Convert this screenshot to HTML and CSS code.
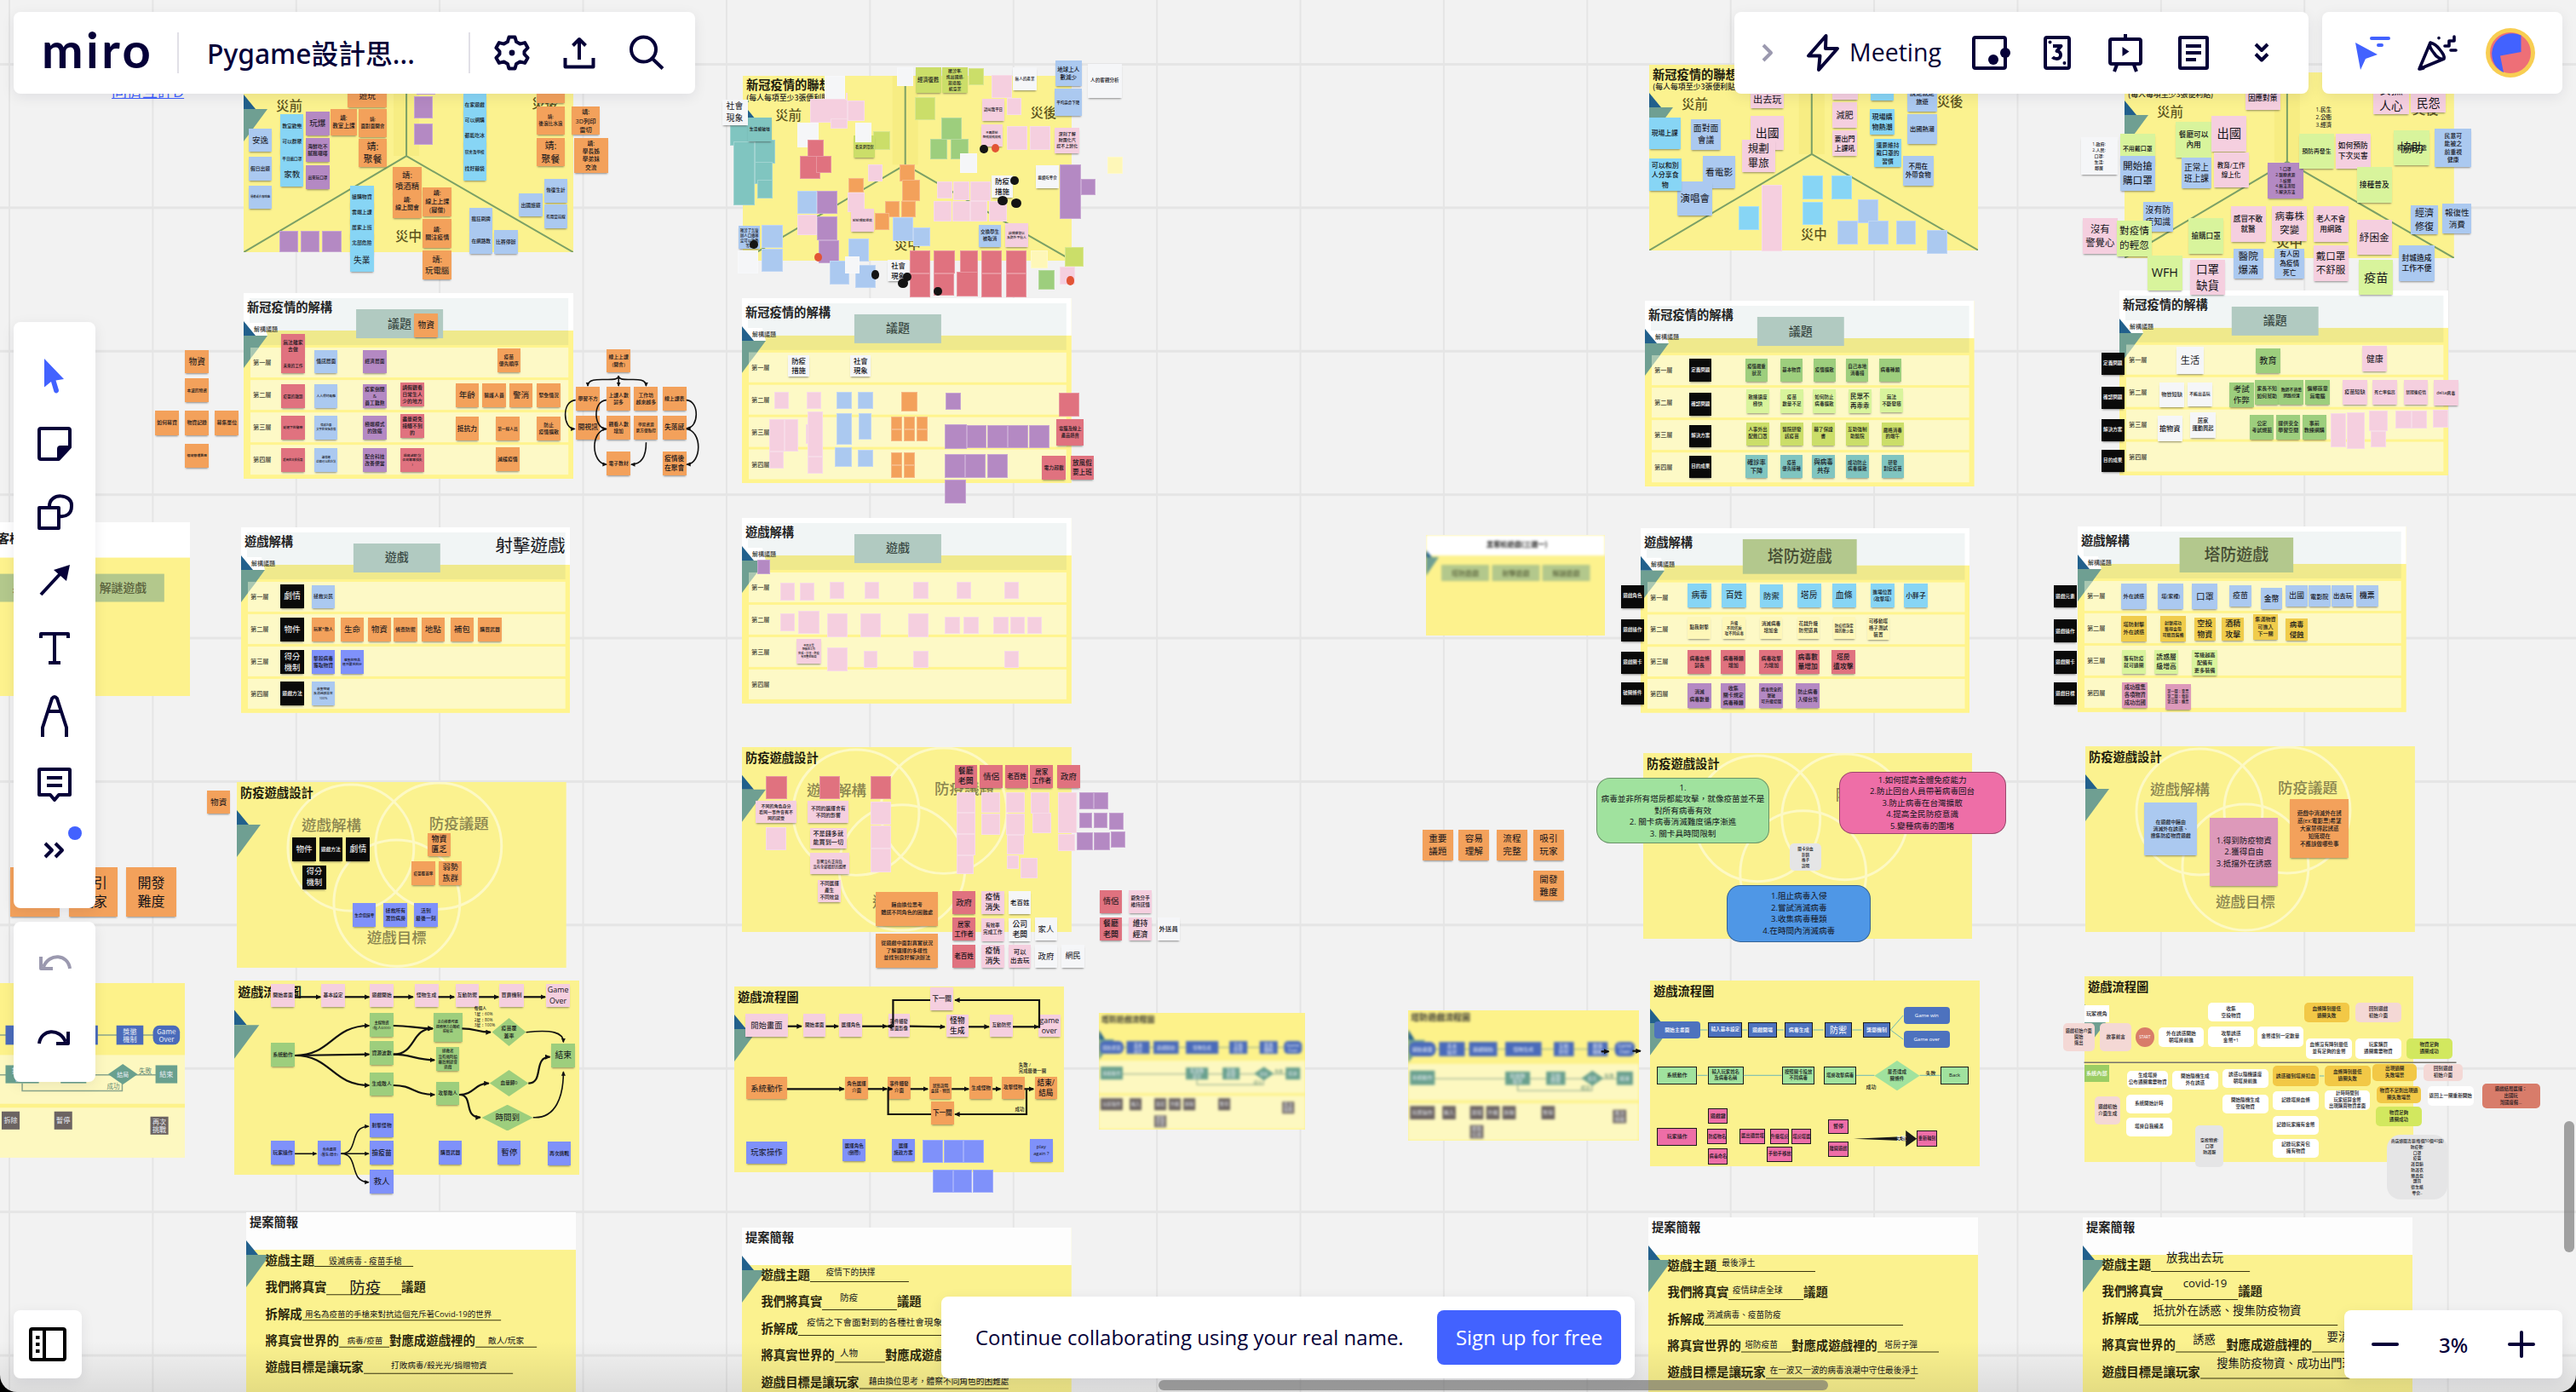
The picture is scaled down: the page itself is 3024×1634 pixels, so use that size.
FILE: index.html
```html
<!DOCTYPE html>
<html lang="zh-Hant">
<head>
<meta charset="utf-8">
<title>Pygame設計思考 - Miro</title>
<link rel="stylesheet" href="styles.css">
</head>
<body>
<main class="board" id="board"></main>

<header class="panel bar-left">
  <span class="logo">miro</span>
  <span class="divider"></span>
  <span class="board-name">Pygame設計思...</span>
  <span class="divider"></span>
  <svg class="icon" viewBox="0 0 44 44"><path d="M18.5 3.5h7l1.6 5.6 4.3 2.5 5.7-1.5 3.5 6.1-4.1 4.2v3.2l4.1 4.2-3.5 6.1-5.7-1.5-4.3 2.5-1.6 5.6h-7l-1.6-5.6-4.3-2.5-5.7 1.5-3.5-6.1 4.1-4.2v-3.2l-4.1-4.2 3.5-6.1 5.7 1.5 4.3-2.5z"/><circle class="solid" cx="22" cy="22" r="3.4"/></svg>
  <svg class="icon" viewBox="0 0 44 44"><path d="M22 30V7M14.5 13.5L22 6l7.500 7.500M5.500 28v10.500h33V28"/></svg>
  <svg class="icon" viewBox="0 0 44 44"><circle cx="18.500" cy="18" r="14.500"/><path d="M29 29l12 11.500"/></svg>
</header>

<div class="panel bar-tools">
  <svg class="icon chevron" viewBox="0 0 16 24"><path d="M3 3l9 9-9 9"/></svg>
  <svg class="icon bolt" viewBox="0 0 44 48"><path d="M25.500 4L5 27.500h13.500L17 44l22-25H25z"/></svg>
  <span class="tool-label">Meeting</span>
  <svg class="icon frame-ic" viewBox="0 0 48 44"><rect x="4" y="4" width="37" height="36" rx="2"/><circle class="solid" cx="27" cy="30" r="6"/><circle class="solid" cx="41" cy="22" r="6"/></svg>
  <svg class="icon card-ic" viewBox="0 0 36 44"><rect x="4" y="4" width="28" height="36" rx="2"/><path d="M13 14h9.500l-5 6c6 0 6 9 0 9-2.500 0-4-.8-5-2"/><circle class="solid" cx="9.500" cy="9.500" r="2"/><circle class="solid" cx="26.500" cy="34" r="2"/></svg>
  <svg class="icon present-ic" viewBox="0 0 44 48"><path d="M22 2v5M12 38l-3 8M32 38l3 8"/><rect x="4" y="8" width="36" height="29" rx="2"/><path class="solid thin" d="M18.500 17l8 5.500-8 5.500z"/></svg>
  <svg class="icon doc-ic" viewBox="0 0 40 44"><rect x="4" y="4" width="32" height="36" rx="1"/><path d="M11 14h18M11 22h18M11 30h12"/></svg>
  <svg class="icon more-ic" viewBox="0 0 20 26"><path d="M3 3l7 7 7-7M3 14.500l7 7 7-7"/></svg>
</div>

<div class="panel bar-user">
  <svg class="icon follow-ic" viewBox="0 0 44 44"><path class="blue-fill" d="M2 10l26 14-14 5-6 13z"/><path class="blue-line" d="M21 5h20M29 13h4"/></svg>
  <svg class="icon party-ic" viewBox="0 0 48 44"><path d="M16 10L3 41l29-12M16 10c4 1 8 4 11 8 4 5 6 8 5 11-4 1-9-2-12-7-4-5-6-9-4-12zM33 14l5 0 0-6 6 0 0-5M40 19h6M4 41l4-1M26 4.500v.2"/></svg>
  <svg class="avatar" viewBox="0 0 58 58"><circle cx="29" cy="29" r="29" fill="#f8ce52"/><circle cx="29" cy="29" r="24" fill="#ee6f77"/><path d="M41.500 8.500V28L17 32.500 21 52A24 24 0 1 1 41.500 8.500z" fill="#4262ff"/></svg>
</div>

<nav class="panel rail">
  <svg class="icon" viewBox="0 0 44 44"><path class="blue-fill" d="M10 2l23 24-9.500 1.500L27 39a3 3 0 0 1-5.500 2L18 29l-8 6.500z"/></svg>
  <svg class="icon" viewBox="0 0 44 44"><path d="M6 4h32a2 2 0 0 1 2 2v20L27 40H6a2 2 0 0 1-2-2V6a2 2 0 0 1 2-2z"/><path class="solid thin" d="M40 24L25 41V28a4 4 0 0 1 4-4z"/></svg>
  <svg class="icon" viewBox="0 0 44 44"><rect x="4" y="17" width="23" height="24"/><path d="M16 15c0-16 27-15 26 0 0 9-6 13-14 12"/></svg>
  <svg class="icon" viewBox="0 0 44 44"><path d="M6 39L31 12"/><path class="solid thin" d="M40 4l-4 19L21 10z"/></svg>
  <svg class="icon" viewBox="0 0 44 44"><path d="M6 10V5h32v5M22 5v34M15 39h14"/></svg>
  <svg class="icon tall" viewBox="0 0 44 52"><path d="M8 50V39L19 5q3-4 6 0l11 34v11M14 20h16"/></svg>
  <svg class="icon" viewBox="0 0 44 44"><path d="M5 4h34a1 1 0 0 1 1 1v29H27l-5 6-5-6H4V5a1 1 0 0 1 1-1zM13 14h18M13 23h18"/></svg>
  <svg class="icon more-rail" viewBox="0 0 44 44"><path d="M11 14l8 8-8 8M23 14l8 8-8 8"/></svg>
  <span class="dot-new"></span>
</nav>

<nav class="panel history">
  <svg class="icon muted" viewBox="0 0 44 44"><path d="M40 29C38 12 16 10 9 27M6 15v14h14"/></svg>
  <svg class="icon" viewBox="0 0 44 44"><path d="M4 29C6 12 28 10 35 27M38 15v14H24"/></svg>
</nav>

<div class="panel frames-toggle">
  <svg class="icon ink" viewBox="0 0 46 44"><rect x="3" y="4" width="40" height="36" rx="2"/><path d="M19 4v36M9 14h4.500M9 22h4.500M9 30h4.500"/></svg>
</div>

<div class="panel signup">
  <span>Continue collaborating using your real name.</span>
  <button class="signup-btn">Sign up for free</button>
</div>

<div class="panel zoom">
  <svg class="icon" viewBox="0 0 32 32"><path d="M2 16h28"/></svg>
  <span>3%</span>
  <svg class="icon" viewBox="0 0 32 32"><path d="M2 16h28M16 2v28"/></svg>
</div>

<div class="scroll-h"></div>
<div class="scroll-v"></div>
<script src="board.js"></script>
</body>
</html>
```

FILE: styles.css
```css
* { box-sizing: border-box; }

html { background: #000; }

body {
  margin: 0;
  width: 3024px;
  height: 1634px;
  overflow: hidden;
  position: relative;
  color: #050038;
  font-family: "Open Sans", "Noto Sans", "Noto Sans CJK TC", sans-serif;
}

/* canvas */
.board {
  position: absolute;
  inset: 0;
  overflow: hidden;
  border-radius: 0 0 20px 20px;
  background-color: #f2f2f2;
  background-image:
    linear-gradient(90deg, #e5e5e5 2px, transparent 2px),
    linear-gradient(#e5e5e5 3px, transparent 3px);
  background-size: 168.4px 168.4px;
  background-position: 10px 0, 0 74px;
}

.board::after {
  content: "";
  position: absolute;
  inset: auto 0 0 0;
  height: 60px;
  background: linear-gradient(transparent, rgba(0, 0, 0, .09));
}

.slide { position: absolute; display: block; overflow: hidden; }
.slide text { font-family: "Noto Sans CJK TC", "Open Sans", sans-serif; }
.slide svg { display: block; }
.slide.soft { background: #fdf28a; }
.slide.soft svg { filter: blur(1.4px); }
.links { position: absolute; left: 0; top: 0; pointer-events: none; }
.links path { fill: none; stroke: #111; stroke-width: 1.6; }
.links .thick { stroke-width: 2.2; }
.links .blue { stroke: #6fb7b5; stroke-width: 1; }
.links .rule { stroke: #77736c; stroke-width: 1.5; }
.links .wedge { fill: #1a1a1a; stroke: none; }

.item {
  position: absolute;
  display: flex;
  align-items: center;
  justify-content: center;
  text-align: center;
  white-space: pre;
  line-height: 1.4;
  color: #14141a;
  font-family: "Open Sans", "Noto Sans CJK TC", sans-serif;
}

.item.small { font-weight: 500; }

.note { box-shadow: 0 2px 2px -1px rgba(40, 40, 40, .5); }
.flat { box-shadow: inset 0 0 0 1px rgba(255, 255, 255, .25); }
.orange { background: #f3a15b; }
.sky { background: #abc9f0; }
.cyan { background: #87d5f5; }
.purple { background: #b489c3; }
.pink { background: #f5cfdf; }
.red { background: #e0727f; }
.green { background: #9dce7d; }
.mint { background: #d8f49c; }
.olive { background: #cbde69; }
.teal { background: #80c5c0; }
.white { background: #f5f6f8; }
.black { background: #0a0a0a; color: #fff; }
.indigo { background: #7f91fa; }
.cream { background: #fef7b8; }
.gold { background: #f0cc4b; }
.mauve { background: #dd99ba; }

.round { border-radius: 5px; }
.box-blue { background: #4d72be; border: 1px solid #1a1a1a; color: #fff; }
.pill-blue { background: #4d72be; border-radius: 4px; color: #fff; }
.box-green { background: #a0e29e; border: 1px solid #1a1a1a; }
.box-pink { background: #ee6ea7; border: 1px solid #1a1a1a; }
.card { border: 1px solid rgba(0, 0, 0, .35); border-radius: 16px; }
.card-green { background: #a0e29e; }
.card-pink { background: #ee6ea7; }
.card-blue { background: #4f97e6; }
.card-grey { background: #e5e5e6; }
.big-round { border-radius: 16px; }
.paper { background: #fff; }
.amber { background: #f2c846; }
.blush { background: #f4d8d5; }
.lime { background: #d2e85f; }
.coral { background: #d87c6a; }
.leaf { background: #9bcd64; color: #fff; }
.start { background: #d87c6a; border-radius: 50%; color: #fff; }
.dot-k { background: #141414; border-radius: 50%; }
.dot-r { background: #e25435; border-radius: 50%; }
.diamond { clip-path: polygon(50% 0, 100% 50%, 50% 100%, 0 50%); }
.label { justify-content: flex-start; text-align: left; }
.label-white { color: #fff; }
.link { color: #4262ff; text-decoration: underline; justify-content: flex-start; }

/* floating panels */
.panel {
  position: absolute;
  display: flex;
  align-items: center;
  background: #fff;
  border-radius: 8px;
  box-shadow: 0 4px 16px rgba(5, 0, 56, .08);
}

.icon {
  flex: none;
  width: 44px;
  height: 44px;
  fill: none;
  stroke: #050038;
  stroke-width: 4;
  stroke-linejoin: round;
  stroke-linecap: butt;
}
.icon .solid { fill: #050038; stroke: none; }
.icon .blue-fill { fill: #4262ff; stroke: none; }
.icon .blue-line { stroke: #4262ff; stroke-linecap: round; }
.icon.muted { stroke: #9b99af; }
.icon.ink { stroke: #000; }

.divider { flex: none; width: 2px; height: 48px; background: #e1e0e7; }

.bar-left { left: 16px; top: 14px; width: 800px; height: 96px; padding-left: 33px; }
.logo { width: 159px; font: 700 58px/60px Lato, sans-serif; letter-spacing: 3.5px; margin-top: -8px; }
.board-name { width: 307px; margin: -2px 0 0 33px; font-size: 31.800px; font-weight: 500; white-space: nowrap; font-family: "Noto Sans", "Noto Sans CJK TC", sans-serif; }
.bar-left .icon { margin-left: 27px; margin-right: 8px; }

.bar-tools { left: 2036px; top: 14px; width: 674px; height: 96px; padding-left: 31px; }
.chevron { width: 16px; height: 24px; stroke: #9b99af; }
.bolt { width: 44px; height: 48px; margin-left: 35px; }
.tool-label { width: 114px; margin-left: 9px; margin-top: -2px; font-size: 28.500px; white-space: nowrap; }
.frame-ic { width: 48px; margin-left: 28px; }
.card-ic { width: 36px; margin-left: 36px; }
.present-ic { width: 44px; height: 48px; margin-left: 40px; }
.doc-ic { width: 40px; margin-left: 38px; }
.more-ic { width: 20px; height: 26px; margin-left: 50px; }

.bar-user { left: 2726px; top: 14px; width: 282px; height: 96px; padding-left: 37px; }
.party-ic { width: 48px; margin-left: 30px; stroke-linecap: round; stroke-width: 3.6; }
.avatar { width: 58px; height: 58px; margin-left: 33px; }

.rail { left: 16px; top: 378px; width: 96px; height: 688px; flex-direction: column; padding-top: 41px; gap: 36px; }
.rail .tall { height: 52px; margin: -4px 0; }
.more-rail { margin-top: -3px; }
.dot-new { position: absolute; left: 64px; top: 592px; width: 16px; height: 16px; border-radius: 50%; background: #4262ff; }

.history { left: 16px; top: 1082px; width: 96px; height: 188px; flex-direction: column; padding-top: 26px; gap: 44px; }
.frames-toggle { left: 16px; top: 1538px; width: 80px; height: 80px; justify-content: center; }
.frames-toggle .icon { width: 46px; }

.signup { left: 1105px; top: 1522px; width: 814px; height: 96px; padding: 0 16px 0 40px; justify-content: space-between; font-size: 24px; white-space: nowrap; }
.signup-btn { width: 216px; height: 64px; border: 0; border-radius: 8px; background: #4262ff; color: #fff; font: 24px "Open Sans", sans-serif; padding-bottom: 3px; }
.signup span { margin-top: -2px; }

.zoom { left: 2752px; top: 1538px; width: 256px; height: 80px; padding: 0 32px; justify-content: space-between; font: 500 24px "Noto Sans", sans-serif; }
.zoom .icon { width: 32px; height: 32px; stroke-linecap: round; }

.scroll-h, .scroll-v { position: absolute; border-radius: 6px; background: rgba(110, 110, 110, .62); }
.scroll-h { left: 1360px; top: 1620px; width: 786px; height: 12px; }
.scroll-v { left: 3010px; top: 1316px; width: 12px; height: 154px; }
```

FILE: board.js
```js
// Slide templates. Full slides use a 387 x 218 viewBox.
const text = (x, y, size, str, extra = '') =>
  `<text x="${x}" y="${y}" font-size="${size}" ${extra}>${str}</text>`;
const title = (str, y = 18) => text(4, y, 14.300, str, 'font-weight="700" fill="#1c1a0c"');
const corner = '<path d="M0 33L14 50H0z" fill="#22608c"/><path d="M0 50h28L0 88z" fill="#6f9f92"/>';
const yellow = '<rect width="387" height="227" fill="#fbf28f"/>';

function associate() {
  const f = 'fill="#5d561f" font-weight="500"';
  return yellow +
    '<rect x="176" width="30" height="105" fill="#f7ed83"/>' +
    '<path d="M191 0V105L0 218M191 105L387 218" fill="none" stroke="#7ba066" stroke-width="2"/>' +
    corner + title('新冠疫情的聯想', 16.500) +
    text(4, 29, 8.900, '(每人每項至少3張便利貼)', 'font-weight="500" fill="#222"') +
    text(38, 52, 15.500, '災前', f) + text(338, 49, 15.500, '災後', f) + text(178, 205, 15.500, '災中', f);
}

function layers(name, tag, big) {
  const rows = [64, 102, 140, 178].map((y, i) =>
    `<rect x="8" y="${y}" width="373" height="35" fill="#fdf9c6"/>` +
    text(11, y + 20, 7.200, ['第一層', '第二層', '第三層', '第四層'][i], 'fill="#4b4a3c" font-weight="500"')).join('');
  const box = big
    ? '<rect x="120" y="13" width="134" height="41" fill="#b3c88d"/>' + text(187, 40.500, 19, tag, 'text-anchor="middle" fill="#454c33" font-weight="500"')
    : '<rect x="132" y="19" width="102" height="34" fill="#b1cac1"/>' + text(183, 40.500, 14, tag, 'text-anchor="middle" fill="#3b4a45" font-weight="500"');
  return '<rect width="387" height="218" fill="#fff48e"/><rect width="387" height="44" fill="#fff"/>' +
    '<rect x="7" y="6" width="374" height="38" fill="#f1f5f5"/><rect x="7" y="44" width="374" height="17" fill="#efe98c"/>' +
    '<path d="M0 35l24 0L28 50L0 50z" fill="#fff"/>' + corner + rows + box +
    '<path d="M8 64h10L8 77z" fill="#a9c7b1"/>' +
    text(4, 22, 14.300, name, 'font-weight="700" fill="#222"') + text(12, 45, 7, '解構議題', 'fill="#333" font-weight="500"');
}

function venn() {
  const f = 'fill="#8a8550" font-weight="500"';
  return yellow + '<g fill="none" stroke="#fdf9c4" stroke-width="3">' +
    '<circle cx="134" cy="77" r="74"/><circle cx="237" cy="75" r="74"/><circle cx="188" cy="142" r="74"/></g>' +
    corner + title('防疫遊戲設計') +
    text(76, 57, 17.500, '遊戲解構', f) + text(226, 55, 17.500, '防疫議題', f) + text(153, 189, 17.500, '遊戲目標', f);
}

function pitch() {
  const b = 'font-weight="700" fill="#2b270c"';
  const ul = (x, x2, y) => `<path d="M${x} ${y}H${x2}" stroke="#39340f" stroke-width="1"/>`;
  return yellow + '<rect width="387" height="44" fill="#fdfdfd"/>' + corner +
    text(4, 17, 14.300, '提案簡報', 'font-weight="700" fill="#222"') +
    text(22.500, 61.500, 14.400, '遊戲主題', b) + ul(80, 196, 63.500) +
    text(22.500, 92.500, 14.400, '我們將真實', b) + ul(94, 182, 96.500) + text(182, 92.500, 14.400, '議題', b) +
    text(22.500, 124.500, 14.400, '拆解成', b) + ul(66, 299, 126.500) +
    text(22.500, 155.500, 14.400, '將真實世界的', b) + ul(109, 168, 158) + text(168, 155.500, 14.400, '對應成遊戲裡的', b) + ul(269, 341, 158) +
    text(22.500, 187, 14.400, '遊戲目標是讓玩家', b) + ul(138, 313, 189);
}

function choose() {
  return '<rect width="210" height="118" fill="#fdf28d"/><rect width="210" height="24" fill="#fff"/>' +
    '<path d="M0 18L7 26H0z" fill="#22608c"/><path d="M0 26h15L0 48z" fill="#6f9f92"/>' +
    text(71, 14, 8.200, '黑客松遊戲(三選一)', 'font-weight="700" fill="#222"') +
    [['塔防遊戲', 18], ['射擊遊戲', 77.500], ['解謎遊戲', 136.500]].map(([s, x]) =>
      `<rect x="${x}" y="35" width="56" height="19" fill="#b3c88c"/>` + text(x + 28, 47.500, 8, s, 'text-anchor="middle" fill="#59613c" font-weight="500"')).join('');
}

function tower() {
  const b = (x, y, w, h, c, s, r = 0) =>
    `<rect x="${x}" y="${y}" width="${w}" height="${h}" rx="${r}" fill="${c}"/>` +
    s.split('|').map((t, i, a) => text(x + w / 2, y + h / 2 + 2 + (i - (a.length - 1) / 2) * 6, 5.400, t, 'text-anchor="middle" fill="#e8ecf4"')).join('');
  const B = '#4a6bba', G = '#69a08e', K = '#6c6462';
  return '<rect width="242" height="136" fill="#fdf28a"/><rect y="56" width="242" height="38" fill="#fdf8c0"/><rect y="97" width="242" height="39" fill="#fdf8c0"/>' +
    '<path d="M0 20L7 31H0z" fill="#22608c"/><path d="M0 31h18L0 55z" fill="#6f9f92"/>' +
    '<path d="M20 40.500H220M20 71.500H220M193 78V84H115V78" fill="none" stroke="#8aa58c" stroke-width="1"/>' +
    text(3, 11, 8.900, '塔防遊戲流程圖', 'font-weight="700" fill="#333"') +
    b(1, 33, 28, 15, B, '開始畫面', 6) + b(32.500, 33, 27, 15, B, '基本|設定') + b(64, 33, 29.500, 15, B, '遊戲開始') +
    b(102, 33, 38, 15, B, '怪物生成') + b(153, 33, 21, 15, B, '互動|防禦') + b(188.500, 33, 21, 15, B, '獎懲|機制') + b(217, 33, 21, 15, B, 'Game|Over', 5) +
    b(2, 63, 26, 15, G, '系統動作') + b(102, 64, 26, 14, G, '投放物|設定') + b(145, 64, 20, 14, G, '互動|防禦') +
    `<path d="M182 71L193.500 63L205 71L193.500 79z" fill="${G}"/>` + text(193.500, 73, 4.600, '結局', 'text-anchor="middle" fill="#e8ecf4"') +
    text(206, 70, 5, '失敗', 'fill="#5f8a74"') + text(181, 82.500, 5, '成功', 'fill="#5f8a74"') + b(219, 64, 17, 14, G, '結束') +
    b(2, 100, 26, 14, K, '玩家操作') + b(36, 100, 14, 14, K, '輸入') + b(65, 100, 14, 14, K, '蓋塔') + b(82, 100, 14, 14, K, '升級') +
    b(99, 100, 14, 14, K, '拆除') + b(140, 100, 14, 14, K, '暫停') + b(215, 104, 14, 14, K, '再次|挑戰') + b(65, 120, 14, 14, K, '選取|位置');
}

const templates = {
  associate: [387, 218, associate],
  issue: [387, 218, () => layers('新冠疫情的解構', '議題')],
  game: [387, 218, () => layers('遊戲解構', '遊戲')],
  defence: [387, 218, () => layers('遊戲解構', '塔防遊戲', true)],
  venn: [387, 218, venn],
  flow: [387, 218, () => yellow + corner + title('遊戲流程圖')],
  pitch: [387, 218, pitch],
  choose: [210, 118, choose],
  tower: [242, 136, tower],
};

const kinds = {
  o: 'orange', b: 'sky', c: 'cyan', p: 'purple', k: 'pink', r: 'red', g: 'green', l: 'mint', v: 'olive',
  t: 'teal', w: 'white', x: 'black', i: 'indigo', y: 'cream', m: 'gold', u: 'mauve',
};

// Each region has its own origin and units per pixel. Item rows: x1 y1 x2 y2 kind text[@size]
const regions = [
{ at: [0, 0, 1.8233, 2.6576],
  slides: `associate 521 207 1227 787
issue 521 914 1227 1494`,
  items: `239 262 403 308 link 同儕互評D@18
532 401 582 474 b 安逸
532 489 582 564 b 假日出遊
532 578 582 652 b 運動或去咖啡廳
600 357 650 432 c 教室歡樂
600 404 650 480 c 可以群聚
600 457 650 530 c 平日戴口罩
600 507 650 582 c 家教
655 349 705 423 p 玩爆
655 431 705 506 p 海鮮吃不|膩瘋囉嘍
655 516 705 590 p 出來玩口罩
707 339 764 423 o 靖:|教室上課
744 262 828 335 o 遊玩
767 340 828 429 o 靖:|面對面開會
767 432 828 521 o 靖:|聚餐
891 270 931 294 p-
886 300 927 369 p-
886 384 927 452 p-
991 291 1041 364 c 在家遊戲
991 338 1041 412 c 可以網購
991 385 1041 460 c 都能吃冰
991 436 1041 510 c 宿舍及學校
991 489 1041 563 c 找好藥袋
1149 260 1209 323 o
1148 332 1209 421 o 靖:|後浪比水浪
1148 430 1209 519 o 靖:|聚餐
1223 332 1284 421 o 靖:|3D列印|雷切
1228 430 1302 539 o 靖:|學長姊|學弟妹|交流
749 578 800 652 c 搶購物資
749 625 800 700 c 雲端上課
749 674 800 748 c 居家上班
749 722 800 796 c 北部危險
749 775 800 849 c 失業
841 521 902 608 o 靖:|噴酒精
841 592 902 680 o 靖:|線上開會
905 585 966 676 o 靖:|線上上課|(寢僧)
905 684 966 774 o 靖:|關注疫情
905 781 966 872 o 靖:|玩電腦
1005 648 1054 721 b 瘋狂刷牌
1005 718 1054 791 b 在網路教
1057 718 1108 791 b 比賽停辦
1111 603 1161 676 b 出國旅遊
1165 559 1214 634 b 恢復生計
1165 638 1214 711 b 有用當前線
598 719 638 787 p-
643 719 684 787 p-
690 719 731 787 p-
886 978 938 1052 o 物資
602 1042 652 1115 r 無法離家|去做
602 1115 652 1165 r 未來的工作
673 1091 723 1164 b 情感層面
777 1091 827 1164 p 經濟層面
1064 1088 1114 1162 o 疫苗|優先順序
602 1199 652 1273 r 疫苗的難題
673 1199 723 1273 b 人人保持距離
777 1199 827 1273 p 疫家倒閉|&|員工難熬
857 1193 908 1268 r 請假觀看|日常生人|少的地方
975 1196 1025 1270 o 年齡
1032 1196 1083 1270 o 醫護人員
1090 1196 1140 1270 o 警消
1149 1196 1200 1270 o 緊急情況
602 1297 652 1371 r 延遲下的醫療
673 1297 723 1371 b 情感方面|文字的安撫表情
777 1297 827 1371 p 極端模式|的致癌
857 1292 908 1366 r 盡量避免|接觸不到|的
975 1300 1025 1375 o 抵抗力
1061 1300 1112 1375 o 第一線人員
1149 1300 1200 1375 o 防止|疫情擴散
602 1398 652 1472 r 超商的大排長龍
673 1398 723 1472 b 讓情緒|這個可以的方法
777 1398 827 1472 p 配合科技|改善便當
857 1398 908 1472 r 投資減薪(含|公司等等損失|)
1061 1396 1112 1470 o 減緩疫情
396 1091 447 1165 o 物資
396 1181 447 1255 o 本波的物資
332 1282 383 1357 o 如何募資
396 1282 447 1357 o 物資記錄
460 1282 511 1357 o 募集單位
396 1385 447 1459 o 個資管理費用
1299 1089 1349 1162 o 線上上課|(開會)
1233 1207 1284 1282 o 學習不方
1299 1207 1349 1282 o 上課人數|變多
1357 1207 1408 1282 o 工作坊|越來越多
1418 1207 1469 1282 o 線上課表
1233 1297 1284 1371 o 開視訊
1299 1297 1349 1371 o 觀看人數|增加
1357 1297 1408 1371 o 學習資源|更方便取得
1418 1297 1469 1371 o 失落感
1299 1409 1349 1483 o 電子教材
1418 1409 1469 1483 o 疫情後|在聚會`,
  links: `t M1324 1172 L1324 1204
t M1324 1172 C1324 1200 1258 1165 1258 1204
t M1324 1172 C1324 1200 1383 1165 1383 1204
t M1232 1248 C1202 1250 1204 1338 1230 1338
t M1298 1248 C1268 1250 1270 1338 1298 1338
t M1469 1248 C1498 1250 1496 1336 1470 1336
t M1298 1338 C1262 1345 1266 1447 1298 1449
t M1469 1338 C1504 1345 1502 1447 1470 1449
t M1383 1380 C1383 1430 1370 1449 1351 1449` },

{ at: [840, 0, 2.8, 2.6576],
  slides: `associate 90 237 1172 813
issue 87 929 1170 1507`,
  items: `358 237 427 312 w-
312 308 434 383 k-
434 314 491 378 k-
378 370 434 401 k-
427 290 434 314 k-
595 210 649 268 w-
657 210 741 290 v 經濟復甦
745 210 829 290 v 確診率,|進出國境,|旅遊股,|航空業
832 212 881 266 v-
908 233 974 305 k-
978 210 1055 282 w 無人的產業
1117 189 1203 269 b 地球上人|數減少
1224 199 1335 306 w 人的客觀分析
1114 275 1203 361 b 平均壽命下降
655 304 722 376 v-
876 307 949 376 k 請叫我平日
957 306 1006 360 k-
48 390 116 454 t-
60 440 128 641 t-
128 436 195 509 t-
128 506 188 574 t-
137 560 188 620 t-
105 367 185 440 t 生活被破壞
21 310 105 390 w 社會|現象
269 383 338 459 w-
517 408 573 468 v-
454 422 525 493 v 看見更環保
459 383 512 444 w-
302 436 357 500 r-
277 485 344 558 r-
330 485 382 539 r-
743 367 810 437 g-
706 434 762 496 g-
773 434 831 496 g-
804 479 859 541 w-
873 388 943 458 k 不再限制|想飛就飛就飛
957 394 1025 467 k-
1033 394 1101 467 k-
1114 398 1197 478 k 深刻了解|財團化汽|提不上變化
501 513 550 566 k-
606 513 655 566 o-
437 555 486 602 o-
613 561 672 627 o-
434 601 489 661 k-
557 626 605 678 o-
610 626 659 678 o-
524 664 571 717 o-
445 651 521 723 k 紛紛隔窗探病
269 595 332 667 b-
332 595 400 667 p-
269 670 332 734 k-
332 675 400 748 p-
338 748 405 821 p-
437 743 504 816 b-
583 678 650 752 b-
650 709 706 768 b-
728 566 777 619 k-
781 566 836 625 k-
838 566 904 627 k-
718 628 777 691 k-
779 628 836 691 k-
836 628 892 691 k-
899 628 958 691 k-
908 548 977 617 w 防疫|措施
1054 516 1128 588 w 繼續吃零食
1132 513 1200 684 p-
1200 557 1249 610 p-
1288 490 1337 543 y-
865 702 938 771 b 交換學生|被取消
952 697 1027 771 k 歧視爆發以|及對外不信人
638 781 706 853 r-
638 853 706 928 r-
718 781 786 853 r-
718 853 784 922 r-
803 781 862 853 r-
792 848 862 924 r-
873 781 940 853 r-
873 853 940 928 r-
955 781 1022 853 r-
955 853 1022 928 r-
1037 781 1091 838 y-
1149 770 1209 833 v-
1060 841 1115 902 g-
1131 833 1181 887 k-
76 704 147 777 b 確診了怎麼|辦人口遷移|定可以攻略|等著
152 702 220 774 b-
152 775 220 848 b-
73 781 140 853 w-
374 814 441 887 b-
459 827 528 899 b-
425 800 473 853 w-
566 810 636 878 w 社會|現象
869 452 895 479 dot-k
970 551 996 578 dot-k
926 611 960 641 dot-k
971 619 1005 648 dot-k
113 748 140 775 dot-k
512 843 538 871 dot-k
616 849 643 876 dot-k
599 870 634 899 dot-k
717 895 744 923 dot-k
906 448 932 475 dot-r
324 788 350 815 dot-r
1153 861 1180 889 dot-r
239 1107 307 1175 w 防疫|措施
443 1107 511 1175 w 社會|現象
193 1223 242 1276 k-
300 1223 348 1276 k-
398 1223 447 1276 b-
468 1223 517 1276 b-
610 1223 665 1283 o-
757 1225 806 1278 p-
1128 1225 1196 1299 r-
297 1323 310 1385 k-
302 1284 352 1424 k-
175 1307 226 1408 k-
226 1307 273 1408 k-
175 1408 225 1462 k-
302 1425 352 1479 k-
398 1289 447 1387 b-
470 1289 512 1371 b-
392 1396 447 1456 b-
468 1403 517 1456 b-
576 1300 612 1339 o-
576 1339 612 1378 o-
620 1300 656 1339 o-
620 1339 656 1378 o-
662 1300 698 1339 o-
662 1339 698 1378 o-
576 1410 612 1450 o-
576 1450 612 1490 o-
620 1410 656 1450 o-
620 1450 656 1490 o-
754 1323 825 1401 p-
825 1325 892 1398 p-
892 1325 961 1398 p-
961 1325 1029 1398 p-
1029 1325 1097 1398 p-
754 1417 821 1491 p-
821 1417 889 1491 p-
893 1417 961 1491 p-
754 1495 822 1571 p-
1121 1308 1210 1391 r 電腦及線上|產品熱賣
1073 1422 1151 1495 r 電力超載
1167 1422 1243 1495 r 放風假|要上班` },

{ at: [1860, 0, 2.7034, 2.6576],
  slides: `associate 204 202 1249 781
issue 192 938 1237 1518`,
  items: `527 239 634 339 k 想要|出去玩
527 362 634 468 k 出國
500 436 604 537 k 規劃|畢旅
376 487 479 588 b 看電影
295 566 406 672 b 演唱會
205 367 305 466 c 現場上課
338 373 433 467 b 面對面|會議
205 494 308 596 c 可以和別|人分享食|物
787 230 867 311 k
908 250 981 313 c
1025 255 1118 349 b 說走就走|旅遊
787 320 865 400 k 減肥
787 407 865 487 k 要出門|上課吼
906 340 984 419 c 現場購|物熱潮
919 434 1006 522 c 還要維持|戴口罩的|習慣
1025 356 1118 449 b 出國熱潮
1011 485 1107 579 b 不用在|外帶食物
692 547 756 622 c-
783 547 848 622 c-
692 629 756 702 c-
488 643 553 717 c-
562 577 627 783 k-
869 622 934 695 b-
803 688 868 762 b-
901 688 966 762 b-
989 688 1053 762 b-
1087 717 1151 791 b-
333 1119 404 1191 x 定義問題
333 1225 404 1297 x 確認問題
333 1325 404 1396 x 解決方案
333 1422 404 1492 x 目的成果
511 1119 581 1191 g 疫情嚴重|狀況
622 1119 692 1191 g 基本物資
726 1119 797 1191 g 疫情擴散
830 1119 901 1191 g 自己本地|消毒措
934 1119 1006 1191 g 病毒種類
514 1215 586 1288 l 散播速度|極快
622 1215 694 1288 l 疫苗|數量不足
725 1215 797 1288 l 如何防止|病毒擴散
838 1215 910 1288 l 民眾不|再乖乖
938 1212 1011 1285 l 無法|不斷發癢
514 1318 586 1389 v 人事外出|配戴口罩
622 1318 694 1389 v 醫院研發|該疫苗
722 1318 794 1389 v 藥了保證|書
830 1318 902 1389 v 互助強制|助醫院
942 1318 1013 1389 v 嚴格消毒|的端午
511 1419 581 1491 t 確診率|下降
622 1419 692 1491 t 疫苗|優先接種
722 1419 794 1491 t 與病毒|共存
830 1419 902 1491 t 成功防止|病毒擴散
944 1419 1013 1491 t 研發|對症疫苗` },

{ at: [2400, 0, 2.5128, 2.6576],
  slides: `associate 237 226 1209 805
issue 220 906 1191 1484`,
  items: `592 235 695 343 k 政府的|因應對策
800 330 860 400 label 1.民生|2.公衛|3.經濟@6.6
970 247 1075 357 k 安撫|人心
1081 240 1184 351 k 平息|民怨
107 429 215 546 w 1.政府:|2.人民:|口罩:|生活:|鄰居@5
223 416 327 516 l 不用戴口罩
223 486 327 596 b 開始搶|購口罩
388 380 492 492 l 餐廳可以|內用
493 362 596 473 k 出國
405 492 492 588 b 正常上|班上課
499 476 602 585 k 教育/工作|線上化
658 508 763 620 p 1.口罩|2.醫療資源|3.搶藥|4.無法流鬧|5.解決方法@4.8
751 417 854 526 l 預防再發生
858 417 962 526 k 如何預防|下次災害
1031 407 1136 517 l 和病毒共處
1047 435 1118 485 label 協助@14
1151 402 1260 521 b 民意可|能被之|前重視|健康@6.8
921 521 1025 632 l 接種普及
291 629 379 722 b 沒有防|疫知識
113 680 215 792 k 沒有|警覺心
213 687 317 799 l 對疫情|的輕忽
425 680 528 792 l 搶購口罩
549 643 652 754 k 感冒不敢|就醫
672 643 774 752 k 病毒株|突變
793 643 896 754 k 老人不會|用網路
921 686 1025 796 k 紓困金
1081 640 1161 730 b 經濟|修復
1174 635 1260 729 b 報復性|消費
303 796 407 905 l WFH
430 811 532 920 k 口罩|缺貨
557 775 645 869 b 醫院|爆滿
679 775 767 869 b 有人因|為疫情|死亡
793 765 896 877 k 戴口罩|不舒服
927 811 1029 920 l 疫苗
1046 765 1150 877 b 封城造成|工作不便
168 1100 235 1169 x 定義問題
168 1207 235 1277 x 確認問題
168 1307 235 1377 x 解決方案
168 1403 235 1472 x 目的成果
389 1082 470 1167 w 生活
623 1087 696 1164 g 教育
938 1080 1010 1158 k 健康
339 1192 413 1270 w 物質短缺
422 1192 495 1268 w 不能出去玩
545 1192 617 1269 g 考試|作弊
621 1186 692 1262 g 家長不知|如何幫助
692 1186 765 1262 g 教師不熟悉|網路授課
769 1186 842 1262 g 偏鄉孩童|無電腦
879 1186 952 1262 k 疫苗短缺
967 1186 1041 1262 k 死亡率偏高
1060 1186 1132 1262 k 新冠後疫情
1147 1186 1221 1265 k delta病毒
333 1298 407 1377 w 搶物資
430 1287 505 1366 w 居家|運動興起
606 1293 677 1370 g 公定|考試規範
683 1293 755 1370 g 提供安全|學習空間
760 1293 832 1370 g 事前|教練網購
844 1289 890 1395 k-
891 1285 945 1401 k-
957 1281 1012 1345 k-
962 1345 1008 1395 k-
1035 1281 1082 1336 k-
1082 1281 1128 1336 k-
1145 1277 1192 1333 k-` },

{ at: [0, 590, 1.8233, 2.8],
  slides: `choose -255 63 407 635
game 515 81 1220 691
venn 507 918 1212 1529`,
  items: `1060 106 1212 176 label 射擊遊戲@20.5
600 269 651 348 x 劇情
667 271 717 348 b 拯救災民
600 378 651 455 x 物件
667 378 717 456 o 玩家+敵人
729 378 779 456 o 生命
787 378 837 456 o 物資
842 378 893 456 o 偵查防禦
902 378 952 456 o 地點
964 378 1014 456 o 補包
1023 378 1074 456 o 購買武器
600 484 651 563 x 得分|機制
667 484 717 563 i 擊殺病毒|獲取物資
729 484 779 563 i 搜集的物品|達到要求的分
600 588 651 666 x 遊戲方法
667 588 717 666 b 收集物資|及消滅感染率|100%
443 945 493 1022 o 物資
626 1100 676 1178 x 物件
683 1100 733 1178 x 遊戲方法
741 1100 792 1178 x 劇情
647 1193 698 1271 x 得分|機制
915 1086 965 1162 o 物資|匱乏
881 1179 931 1257 o 疫苗覆蓋率
939 1179 989 1257 o 弱勢|族群
755 1316 805 1393 i 生命值歸零
821 1316 872 1393 i 拯救所有|潛質病房
886 1316 937 1393 i 活到|最後一刻
22 1198 127 1361 o 流程|完整@16
148 1198 252 1361 o 吸引|玩家@16
270 1198 377 1361 o 開發|難度@16` },

{ at: [840, 590, 2.6133, 2.8],
  slides: `game 81 51 1092 661
venn 81 804 1092 1412`,
  items: `127 187 167 235 p-
198 264 243 321 k-
259 264 304 321 k-
350 260 396 316 k-
458 260 503 316 k-
607 260 653 316 k-
739 260 784 316 k-
886 260 931 316 k-
198 365 243 422 k-
254 355 318 431 k-
342 365 405 442 k-
444 365 507 442 k-
591 365 653 442 k-
703 376 749 432 k-
760 376 807 432 k-
852 376 898 432 k-
904 376 950 432 k-
956 376 1001 432 k-
248 448 324 530 k 不同大眾|想做的工作|完成、打怪、防疫|有完整的結局
342 476 405 553 k-
454 487 498 543 k-
607 487 653 543 k-
886 487 931 543 k-
154 898 219 974 r-
319 898 382 974 r-
475 898 538 974 r-
124 980 248 1053 k 不同的角色身分|看同一事件會有不|同的感受
154 1067 217 1142 k-
282 980 409 1053 k 不同的選擇會有|不同的影響
290 1070 401 1137 k 不是錢多就|能買到一切
290 1152 409 1221 k 影響沒有正與負|沒有全部都好的選擇
314 1239 384 1313 k 不同選擇|產生|不同效益
475 984 538 1060 k-
475 1060 538 1138 k-
475 1138 538 1216 k-
733 862 802 938 r 餐廳|老闆
810 862 881 938 r 情侶
889 862 959 938 r 老百姓
965 862 1035 938 r 居家|工作者
1048 862 1118 938 r 政府
740 951 797 1019 k-
740 1020 797 1090 k-
740 1090 797 1160 k-
740 1158 792 1222 k-
816 951 873 1020 k-
816 1022 873 1092 k-
891 951 948 1020 k-
891 1022 948 1092 k-
894 1092 945 1157 k-
894 1158 930 1204 k-
936 1168 988 1234 k-
968 953 1024 1022 k-
971 1019 1029 1088 k-
1051 951 1108 1088 k-
1051 1088 1102 1145 k-
1116 952 1161 1008 p-
1161 952 1205 1008 p-
1116 1019 1156 1070 p-
1161 1019 1201 1070 p-
1206 1019 1251 1075 p-
1107 1084 1158 1144 p-
1160 1084 1210 1144 p-
1212 1080 1256 1134 p-
492 1279 682 1392 o 藉由換位思考|體感不同角色的困難處
492 1417 682 1528 o 從遊戲中面對真實狀況|了解選擇的多樣性|並找到良好解決辦法
727 1277 797 1352 r 政府
815 1277 885 1352 k 疫情|消失
899 1277 968 1352 w 老百姓
727 1364 797 1440 r 居家|工作者
815 1366 885 1441 k 有效率|完成工作
899 1366 968 1441 w 公司|老闆
979 1364 1049 1440 w 家人
727 1453 797 1529 r 老百姓
815 1453 885 1529 k 疫情|消失
899 1453 968 1529 k 可以|出去玩
979 1453 1049 1529 w 政府
1062 1453 1131 1529 w 網民
1178 1274 1247 1350 r 情侶
1268 1274 1338 1350 k 避免分手|維持感情
1178 1364 1247 1440 r 餐廳|老闆
1268 1364 1338 1440 k 維持|經濟
1355 1364 1424 1440 w 外送員` },

{ at: [1640, 590, 2.1189, 2.8],
  slides: `choose.soft 72 106 517 437
defence 605 84 1424 691
venn 612 824 1431 1433`,
  items: `557 271 614 347 x 遊戲角色
557 384 614 458 x 遊戲操作
557 490 614 563 x 遊戲關卡
557 591 614 665 x 破關條件
723 266 782 345 c 病毒
808 266 869 345 c 百姓
903 268 959 344 c 防禦
995 266 1055 345 c 塔房
1082 266 1142 345 c 血條
1177 266 1237 345 c 進場位置|(攻擊塔)
1261 266 1320 345 c 小胖子
723 375 780 449 y 點我射擊
810 375 867 449 y 升級|不同塔房|攻不同病毒
902 375 958 449 y 消滅病毒|增加金
995 375 1051 449 y 花錢升級|防禦道具
1084 375 1140 449 y 防疫措施定|期的數少血
1169 375 1225 452 y 可移動塔|格子測試|裝置
723 484 782 563 r 病毒血條|變長
806 484 867 563 r 病毒種類|增加
901 484 961 563 r 病毒攻擊|力增加
992 484 1051 563 r 病毒數|量增加
1080 484 1140 563 r 塔房|遭攻擊
723 594 782 675 p 消滅|病毒數量
806 594 867 675 p 收集|關卡規定|病毒種類
901 594 961 675 p 病毒完全的|擊破|可升級場關
992 594 1051 675 p 防止病毒|入侵台灣
495 903 927 1121 card_card-green 1.|病毒並非所有塔房都能攻擊，就像疫苗並不是|對所有病毒有效|2. 關卡病毒消滅難度循序漸進|3. 關卡具時間限制@9.6
1099 884 1514 1090 card_card-pink 1.如何提高全體免疫能力|2.防止回台人員帶著病毒回台|3.防止病毒在台灣擴散|4.提高全民防疫意識|5.變種病毒的圍堵@9.6
977 1121 1055 1209 card-grey_round 關卡分血|影銷|格子|說明@4.6
820 1257 1179 1444 card_card-blue 1.阻止病毒入侵|2.嘗試消滅病毒|3.收集病毒種類|4.在時間內消滅病毒@9.6
64 1075 139 1176 o 重要|議題@10.6
153 1075 230 1176 o 容易|理解@10.6
248 1075 324 1176 o 流程|完整@10.6
339 1075 415 1176 o 吸引|玩家@10.6
339 1210 415 1309 o 開發|難度@10.6` },

{ at: [2380, 590, 2.4348, 2.8],
  slides: `defence 144 78 1083 688
venn 166 801 1108 1411`,
  items: `75 271 141 345 x 遊戲元素
75 384 141 459 x 遊戲操作
75 487 141 563 x 遊戲關卡
75 590 141 664 x 遊戲目標
268 266 340 350 b 外在誘惑
373 266 446 350 b 塔(家裡)
471 266 544 350 b 口罩
577 271 640 343 b 疫苗
667 280 728 351 b 金幣
738 271 801 343 b 出國
803 271 866 343 b 電影院
869 271 933 343 b 出去玩
940 271 1002 343 b 機票
268 372 340 457 m 塔防射擊|外在誘惑
380 372 453 457 m 射擊成功|獲得金幣|可購買裝備
476 378 538 454 m 空投|物資
556 378 618 454 m 酒精|攻擊
645 367 716 451 m 集滿物資|可進入|下一關
738 381 801 453 m 病毒|侵蝕
270 485 338 563 l 獲有防疫|就可過關
363 485 431 563 l 誘惑層|級增高
471 485 543 569 l 等級越高|配備有|更多裝備
271 591 344 675 u 成功搜集|各項物資|成功出國
394 596 467 680 u 第一關：車票|第二關：電影|第三關：機票
334 986 485 1159 b 在遊戲中藉由|消滅外在誘惑、|搜集防疫物資遊戲@5.9
751 974 918 1167 o 遊戲中消滅外在誘|惑(ex:電影票)希望|大家禁得起誘惑|知道現在|不應該做哪些事@6.5
522 1036 716 1260 u 1.得到防疫物資|2.獲得自由|3.抵擋外在誘惑@9.5` },

{ at: [0, 1130, 1.8233, 3],
  slides: `tower -268 72 396 687
flow 501 64 1240 746
pitch 527 879 1233 1534`,
  items: `580 75 631 156 k 開始畫面
688 75 738 156 k 基本設定
792 75 842 156 k 遊戲開始
887 75 938 156 k 怪物生成
975 75 1025 156 k 互動防禦
1069 75 1121 156 k 買賣機制
1169 75 1220 156 k Game|Over
792 177 842 261 g 主線物資|(每人6000)
792 276 842 360 g 資源波數
792 386 842 469 g 生成敵人
580 281 631 366 g 系統動作
928 176 989 278 g 走向移動可選|擇轉彎方向補給|撿疫苗
934 297 983 380 g 拯救者|沒有過時給|最后剩餘會|遊戲
934 419 983 502 g 攻擊敵人
1180 286 1231 370 g 結束
1053 195 1126 294 green_diamond 疫苗覆|蓋率@6
1048 378 1131 471 green_diamond 血量歸0@5.6
1031 500 1141 592 green_diamond 時間到@9.5
1015 151 1060 231 label 每個人|1星：60%|2星：80%|3星：100%@4.8
792 531 842 615 i 射擊怪物
580 627 631 711 i 玩家操作
680 627 730 711 i 角色選擇|(醫生/騎士)
792 627 842 711 i 撿疫苗
939 627 989 711 i 購買武器
1065 627 1115 711 i 暫停
1172 630 1222 714 i 再次挑戰
792 729 842 812 i 救人
704 1036 860 1066 label 毀滅病毒 - 疫苗手槍@9.7
748 1118 816 1168 label 防疫@18.5
653 1222 1058 1254 label 用名為疫苗的手槍來對抗這個充斥著Covid-19的世界@9.5
743 1315 820 1345 label 病毒/疫苗@9.6
1045 1315 1121 1345 label 敵人/玩家@9.6
837 1403 1043 1433 label 打敗病毒/殺光光/捐贈物資@9.6`,
  links: `a M631 121 L686 121
a M738 121 L790 121
a M842 121 L884 121
a M938 121 L972 121
a M1025 121 L1067 121
a M1121 121 L1167 121
a M631 327 C710 327 710 222 790 222
a M631 327 L790 323
a M631 327 C710 327 710 432 790 432
a M842 222 C880 222 890 232 926 232
a M842 323 C890 323 880 232 926 232
a M842 323 C880 323 890 343 930 343
a M842 432 C885 432 885 465 930 465
a M989 232 C1020 232 1020 245 1050 245
t M1126 245 C1180 235 1206 245 1206 280
a M983 465 C1015 465 1015 425 1046 425
a M983 465 C1015 465 990 545 1028 545
a M1131 425 C1165 425 1140 332 1177 332
t M1141 545 C1190 550 1206 470 1206 385
t M631 673 L677 673
t M730 673 L789 673
t M730 673 C770 673 745 577 789 577
t M730 673 C770 673 745 773 789 773` },

{ at: [840, 1130, 2.0632, 3],
  slides: `flow 45 84 844 738
tower.soft 928 178 1428 587
pitch 64 933 862 1587`,
  items: `72 180 175 261 k 開始畫面@9.3
212 180 267 261 k 開始畫面
300 180 355 261 k 選擇角色
418 180 470 261 k 事件觸發|畫面影像
520 87 576 168 k 下一關
558 182 613 262 k 怪物|生成
665 182 720 262 k 互動防禦
781 182 836 262 k game|over
74 402 173 481 o 系統動作@9.3
314 402 369 481 o 角色選擇|介面
417 402 472 481 o 事件觸發|介面
517 402 572 481 o 狀態說明|金錢、物質
615 402 671 481 o 生成怪物
693 402 748 481 o 攻擊怪物
773 402 827 481 o 結束/|結局
522 489 577 571 o 下一關
734 352 800 395 label 失敗 /|完成最後一關@5.4
725 508 748 528 label 成功@5.5
74 630 173 708 i 玩家操作@9.3
308 621 363 700 i 選擇角色|(倒帶)
427 621 482 700 i 選擇|施政方案
502 624 552 706 i-
552 624 601 706 i-
601 624 650 706 i-
525 728 575 809 i-
575 728 622 809 i-
622 728 672 809 i-
761 621 817 701 i play|again ?
267 1076 387 1106 label 疫情下的抉擇@9.7
301 1165 345 1195 label 防疫@10.6
221 1252 548 1282 label 疫情之下會面對到的各種社會現象@10.6
301 1361 345 1391 label 人物@10.6
371 1460 712 1490 label 藉由換位思考，體察不同角色的困難處@9.7`,
  links: `a M175 224 L208 224
a M267 224 L297 224
a M355 224 L415 224
a M470 224 L555 226
a M613 226 L662 226
a M720 226 L782 226
a M520 132 L430 132 L430 224 L416 224
a M784 230 L784 132 L580 132
a M173 445 L311 445
a M369 445 L415 445
a M472 445 L514 445
a M572 445 L613 445
a M671 445 L690 445
a M748 445 L770 445
a M753 448 L753 534 L580 534
a M522 534 L418 534 L418 445 L428 445` },

{ at: [1600, 1130, 2.0103, 3],
  slides: `tower.soft 107 169 651 627
flow 677 64 1455 717
pitch 673 897 1451 1551`,
  items: `687 206 796 267 pill-blue 開始主畫面@5.8
815 211 895 263 box-blue 輸入基本設定@5.6
909 211 977 263 box-blue 遊戲開場@6
995 211 1062 263 box-blue 病毒生成@6
1089 211 1155 263 box-blue 防禦@10
1179 211 1245 263 box-blue 獎懲機制@6
1276 156 1385 216 pill-blue Game win@6
1276 240 1385 301 pill-blue Game over@6
694 367 789 428 box-green 系統動作@6
814 367 898 428 box-green 輸入玩家姓名|及病毒名稱@5.4
989 367 1066 428 box-green 按照關卡投放|不同病毒@5.4
1088 367 1164 428 box-green 塔房攻擊病毒@5.4
1207 345 1314 451 card-green_diamond 是否達成|關條件@5.6
1363 367 1430 428 box-green Back@6
1328 376 1356 406 label 失敗@6
1187 424 1215 454 label 成功@6
815 514 861 567 box-pink 遊戲鍵@6
694 583 789 644 box-pink 玩家操作@6
813 585 859 640 box-pink 防疫物名@5.2
889 585 950 640 box-pink 選出適當塔@5.4
960 585 1006 640 box-pink 升級塔房@5.2
1012 585 1058 640 box-pink 塔房塔選@5.2
815 655 861 710 box-pink 病毒命名@5.2
953 648 1014 701 box-pink 手動手移放@5.4
1098 552 1145 604 box-pink 暫停@6
1098 631 1145 683 box-pink 離開遊戲@5.2
1307 592 1355 647 box-pink 重新輪到@5.2
847 1045 926 1075 label 最後淨土@9.8
872 1139 990 1169 label 疫情肆虐全球@9.8
811 1226 986 1256 label 消滅病毒、疫苗防疫@9.7
901 1331 978 1361 label 塔防疫苗@9.7
1231 1331 1309 1361 label 塔房子彈@9.7
960 1421 1310 1451 label 在一波又一波的病毒浪潮中守住最後淨土@9.7`,
  links: `c M796 237 L813 237
c M895 237 L907 237
c M977 237 L993 237
c M1062 237 L1087 237
c M1155 237 L1177 237
c M1245 237 L1275 186
c M1245 237 L1275 270
c M789 397 L813 397
c M898 397 L988 397
c M1164 397 L1207 397
c M1314 397 L1363 397
a M562 313 L580 313
a M636 311 L655 311
w M1158 620 L1281 612 L1281 591 L1307 620 L1281 648 L1281 628`,
  over: `1258 606 1284 634 label-white 失敗@5.4` },

{ at: [2380, 1130, 2.4348, 3],
  slides: `flow 162 48 1104 701
pitch 158 897 1101 1551`,
  items: `162 150 234 210 paper 玩家視角
101 214 192 312 blush_round 遊戲初始介面|開始|退出@5.2
207 214 298 312 blush_round 故事前言@5.6
308 228 363 297 start START@4.6
374 228 505 296 paper_round 外在誘惑開始|朝塔房前進@5.8
516 141 648 208 paper_round 收集|空投物資@5.8
516 225 648 296 paper_round 攻擊誘惑|金幣+1@5.8
657 225 789 296 paper_round 金幣達到一定數量@5.6
790 141 920 210 amber_round 血條降到最低|過關失敗@5.6
937 141 1069 210 blush_round 回到遊戲|初始介面@5.6
796 267 928 338 paper_round 血條沒有降到最低|並有足夠的金幣@5.6
937 267 1069 338 paper_round 玩家購買|通關需要物資@5.6
1083 267 1214 338 lime_round 物資足夠|通關成功@5.6
162 360 234 419 leaf 系統內部
285 381 402 442 paper_round 生成塔房|公布通關需要物資@5.6
414 381 545 447 paper_round 開始隨機生成|外在誘惑@5.6
557 376 688 442 paper_round 誘惑以隨機速度|朝塔房前進@5.6
701 364 833 434 amber_round 誘惑碰到塔房扣血@5.8
849 364 981 434 amber_round 血條降到最低|過關失敗@5.6
987 356 1113 416 amber_round 出現過關|失敗場景@5.6
1132 356 1244 416 blush_round 回到遊戲|初始介面@5.6
282 465 413 531 paper_round 系統開始計時@5.6
557 465 688 531 paper_round 開始隨機生成|空投物資@5.6
701 453 833 519 paper_round 記錄塔房血條@5.6
849 450 980 520 paper_round 計時時間到|玩家結算金幣|出現購買物資畫面@5.4
998 435 1125 496 amber_round 物資不足則出現過|關失敗場景@5.6
1144 435 1275 504 paper_round 返回上一關重新開始@5.6
1299 427 1465 514 coral_round 遊戲結局選擇：|出國玩|灣國度假...@5.4
193 472 265 571 blush_round 遊戲初始|介面生成@5.6
282 546 413 612 paper_round 塔房自我補滿@5.6
996 507 1127 576 lime_round 物資足夠|通關成功@5.6
701 540 833 606 paper_round 記錄玩家擁有金幣@5.6
701 621 833 687 paper_round 記錄玩家背包|擁有物資@5.6
480 573 561 720 card-grey_round 空投物資:|口罩|防護服@5
1027 606 1201 833 card-grey_big-round 商店通關清單(每個50個40錢)|防疫數:|口罩|疫苗|護目鏡|防護衣|藥品包|體育|衛生紙|零食..@4.8
397 1020 560 1058 label 放我出去玩@13.4
445 1110 571 1150 label covid-19@13.2
359 1205 782 1245 label 抵抗外在誘惑、搜集防疫物資@13.4
473 1307 537 1347 label 誘惑@13.2
856 1297 950 1337 label 要消滅@13.4
541 1390 960 1430 label 搜集防疫物資、成功出門玩@13.4`,
  links: `r M162 352 L1226 352
c M835 399 L848 399` },
];

const board = document.getElementById('board');
const rows = s => (s || '').split('\n').filter(Boolean);
const textWidth = s => [...s].reduce((n, ch) => n + (ch.charCodeAt(0) < 256 ? 0.57 : 1), 0);

function placed(el, x1, y1, x2, y2, [ox, oy, sx, sy]) {
  const w = (x2 - x1) / sx, h = (y2 - y1) / sy;
  el.style.cssText = `left:${(ox + x1 / sx).toFixed(1)}px;top:${(oy + y1 / sy).toFixed(1)}px;width:${w.toFixed(1)}px;height:${h.toFixed(1)}px`;
  return [w, h];
}

function addSlide(row, at) {
  const [kind, ...box] = row.split(' ');
  const [name, soft] = kind.split('.');
  const [w, h, draw] = templates[name];
  const el = document.createElement('div');
  el.className = 'slide' + (soft ? ' soft' : '');
  placed(el, ...box.map(Number), at);
  el.innerHTML = `<svg width="100%" height="100%" viewBox="0 0 ${w} ${h}" preserveAspectRatio="none">${draw()}</svg>`;
  board.append(el);
}

function addItem(row, at) {
  const [x1, y1, x2, y2, kind, ...rest] = row.split(' ');
  const [body, size] = rest.join(' ').split('@');
  const el = document.createElement('div');
  const code = kind.replace('-', '');
  const cls = kinds[code] && kind.length <= 2
    ? kinds[code] + (kind.endsWith('-') ? ' flat' : ' note')
    : kind.replace(/_/g, ' ');
  el.className = 'item ' + cls;
  const [w, h] = placed(el, +x1, +y1, +x2, +y2, at);
  if (body) {
    const lines = body.split('|');
    el.textContent = lines.join('\n');
    const longest = Math.max(...lines.map(textWidth));
    const auto = Math.min(0.35 * Math.min(w, h), 0.84 * w / longest, 0.92 * h / (1.4 * lines.length));
    const px = +(size || auto.toFixed(1));
    el.style.fontSize = px + 'px';
    if (px < 9) el.classList.add('small');
  }
  board.append(el);
}

const linkClass = { a: 'thick', t: '', c: 'blue', r: 'rule', w: 'wedge' };

function linkPath(row, [ox, oy, sx, sy]) {
  const d = row.slice(2).replace(/(-?[\d.]+) (-?[\d.]+)/g, (m, x, y) =>
    `${(ox + x / sx).toFixed(1)} ${(oy + y / sy).toFixed(1)}`);
  const head = { a: 'head', t: 'head-small' }[row[0]];
  return `<path class="${linkClass[row[0]]}" d="${d}"${head ? ` marker-end="url(#${head})"` : ''}/>`;
}

regions.forEach(r => rows(r.slides).forEach(s => addSlide(s, r.at)));
regions.forEach(r => rows(r.items).forEach(s => addItem(s, r.at)));

const layer = document.createElement('div');
layer.className = 'links';
layer.innerHTML = `<svg width="3024" height="1634"><defs>
<marker id="head" markerUnits="userSpaceOnUse" markerWidth="7" markerHeight="7" refX="5.500" refY="3" orient="auto"><polygon points="0,0 6.500,3 0,6" fill="#111"/></marker>
<marker id="head-small" markerUnits="userSpaceOnUse" markerWidth="6" markerHeight="6" refX="4.500" refY="2.500" orient="auto"><polygon points="0,0 5.500,2.500 0,5" fill="#111"/></marker>
</defs>${regions.map(r => rows(r.links).map(s => linkPath(s, r.at)).join('')).join('')}</svg>`;
board.append(layer);
regions.forEach(r => rows(r.over).forEach(s => addItem(s, r.at)));
```
